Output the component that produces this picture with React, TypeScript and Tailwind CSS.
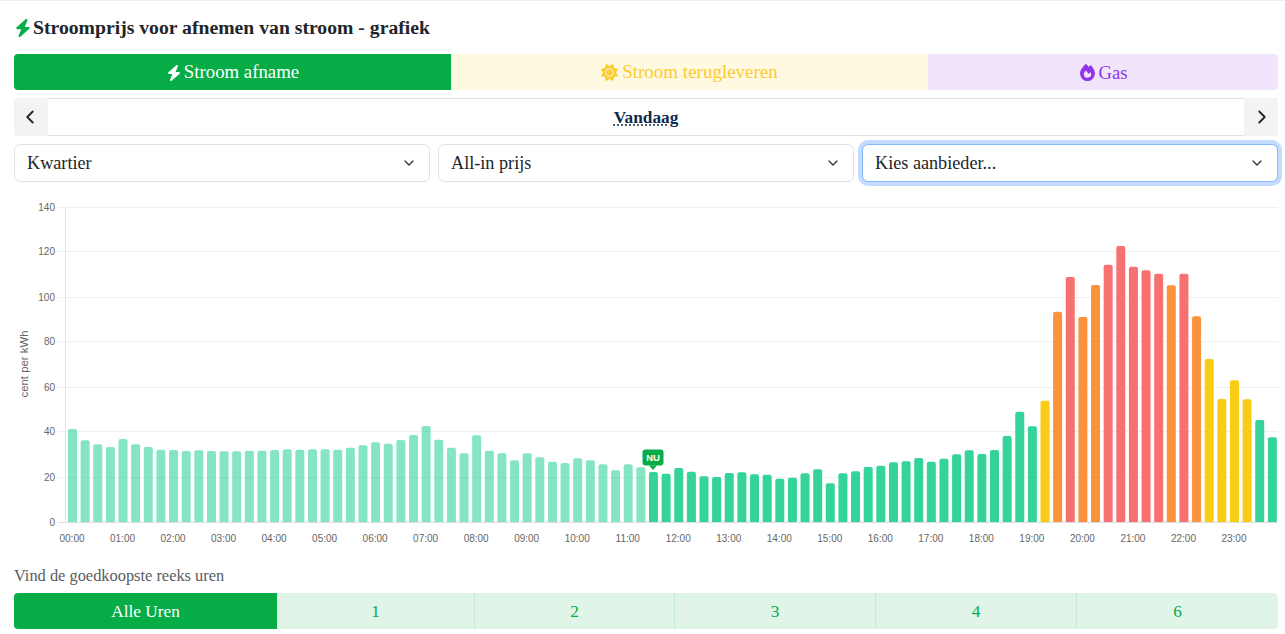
import { ChevronDown, ChevronLeft, ChevronRight } from "lucide-react";
import { FaBolt, FaFire, FaSun } from "react-icons/fa6";

const BASE_Y = 522;
const BAR_PITCH = 12.63;
const NOW_INDEX = 46;

// y axis ticks with the pixel row of their grid line
const ticks = [
  { v: 0, row: 522 },
  { v: 20, row: 477 },
  { v: 40, row: 431 },
  { v: 60, row: 387 },
  { v: 80, row: 341 },
  { v: 100, row: 297 },
  { v: 120, row: 251 },
  { v: 140, row: 207 },
];

// bar heights in px, one per quarter of an hour
const heights = [
  93, 81.7, 77.7, 75, 83, 77.7, 75, 72.3, 72, 71, 71.7, 71, 70.7, 70.7, 71.3, 71.3, 72, 72.7, 72.3, 72.7, 72.7,
  72.3, 74.3, 76.7, 79.7, 78.3, 82, 87, 96, 82.3, 74.3, 68.7, 86.7, 71.3, 68.7, 61.7, 68.7, 64.7, 60.3, 59, 63.7,
  61.7, 57.7, 51.7, 57.7, 54.7, 50, 48.3, 54, 50.3, 45.7, 45, 49, 49.7, 47.7, 47.3, 43.3, 44.3, 48.7, 52.7, 38.7,
  48.7, 50.7, 55, 56.3, 59.7, 60.7, 64, 60.3, 63.3, 67.7, 71.7, 68, 72, 86, 110.3, 95.7, 121.3, 210.3, 245, 205,
  237, 257.3, 276, 255.3, 251.7, 248.3, 236.7, 248.3, 205.7, 163, 123, 141.7, 122.7, 102, 84.7,
];

const barFill = (h: number) => {
  if (h >= 245) return "#f87171";
  if (h >= 200) return "#fb923c";
  if (h >= 120) return "#facc15";
  return "#34d399";
};

const Select = ({ label, focus }: { label: string; focus?: boolean }) => (
  <div
    className={`flex-1 h-[38px] flex items-center justify-between pl-3 pr-3 rounded-md border bg-white text-[#212529] text-[18.2px] ${
      focus ? "border-[#86b7fe] ring-4 ring-[#0d6efd]/25" : "border-[#dee2e6]"
    }`}
  >
    <span className="pt-px">{label}</span>
    <ChevronDown size={16} strokeWidth={2} className="text-[#343a40]" />
  </div>
);

const Chart = () => (
  <svg width="1285" height="362" viewBox="0 190 1285 362" className="block" fontFamily="'Liberation Sans', sans-serif">
    {ticks.map(({ v, row }) => (
      <g key={v}>
        <line x1="58" x2="1278" y1={row + 0.5} y2={row + 0.5} stroke={v === 0 ? "#dddddd" : "#f0f0f0"} />
        <text x="55" y={row + 4} fontSize="10" fill="#666666" textAnchor="end">
          {v}
        </text>
      </g>
    ))}
    <line x1="65.5" x2="65.5" y1="207" y2={BASE_Y} stroke="#e5e5e5" />
    <text transform="translate(28 364) rotate(-90)" fontSize="11.4" fill="#666666" textAnchor="middle">
      cent per kWh
    </text>
    {heights.map((h, i) => {
      const x = 68 + i * BAR_PITCH;
      const y = BASE_Y - h;
      return (
        <path
          key={i}
          d={`M${x} ${BASE_Y}V${y + 2}Q${x} ${y} ${x + 2} ${y}H${x + 7}Q${x + 9} ${y} ${x + 9} ${y + 2}V${BASE_Y}Z`}
          fill={barFill(h)}
          fillOpacity={i < NOW_INDEX ? 0.6 : 1}
        />
      );
    })}
    {Array.from({ length: 24 }, (_, hour) => (
      <text key={hour} x={72 + hour * 4 * BAR_PITCH} y="542" fontSize="10" fill="#666666" textAnchor="middle">
        {`${String(hour).padStart(2, "0")}:00`}
      </text>
    ))}
    <rect x="642.5" y="449.5" width="21" height="16" rx="3" fill="#06ad47" />
    <path d="M649 465.5h8l-4 4.5z" fill="#06ad47" />
    <text x="653" y="460.5" fontSize="9.5" fontWeight="700" fill="#ffffff" textAnchor="middle">
      NU
    </text>
  </svg>
);

const hourTabs = [
  { label: "1", w: "w-[197px]" },
  { label: "2", w: "w-[200px]" },
  { label: "3", w: "w-[201px]" },
  { label: "4", w: "w-[201px]" },
  { label: "6", w: "w-[202px]" },
];

export default function App() {
  return (
    <div className="w-[1285px] h-[634px] overflow-hidden bg-white border-t border-[#eeeeee] font-['Liberation_Serif',serif]">
      <div className="h-[53px] pl-[14px] pt-px flex items-center gap-px text-[#212529] font-bold text-[19.7px]">
        <FaBolt size={18} className="text-[#06ad47]" />
        <h1>Stroomprijs voor afnemen van stroom - grafiek</h1>
      </div>

      <div className="ml-[14px] mr-[7px] h-9 flex rounded overflow-hidden text-[18.6px]">
        <div className="w-[437px] pt-px flex items-center justify-center gap-[2px] bg-[#06ad47] text-white">
          <FaBolt size={16} />
          <span className="text-[18.8px]">Stroom afname</span>
        </div>
        <div className="w-[477px] pt-px flex items-center justify-center gap-1 bg-[#fff9e2] text-[#fdcb2e]">
          <FaSun size={17} />
          <span className="text-[19px]">Stroom terugleveren</span>
        </div>
        <div className="flex-1 pt-px flex items-center justify-center gap-[3px] bg-[#f1e5fb] text-[#9333ea]">
          <FaFire size={17} />
          Gas
        </div>
      </div>

      <div className="ml-[14px] mr-[7px] mt-2 h-[38px] flex">
        <div className="w-[34px] pr-0.5 flex items-center justify-center bg-[#f3f3f4] rounded-l text-[#212529]">
          <ChevronLeft size={22} strokeWidth={2} />
        </div>
        <div className="flex-1 pt-px flex items-center justify-center border-y border-[#dee2e6] text-[#0f2a4a] font-bold text-[17.3px]">
          <span className="underline decoration-dotted underline-offset-2">Vandaag</span>
        </div>
        <div className="w-[34px] pl-0.5 flex items-center justify-center bg-[#f3f3f4] text-[#212529]">
          <ChevronRight size={22} strokeWidth={2} />
        </div>
      </div>

      <div className="ml-[14px] mr-[7px] mt-2 flex gap-2">
        <Select label="Kwartier" />
        <Select label="All-in prijs" />
        <Select label="Kies aanbieder..." focus />
      </div>

      <div className="mt-2">
        <Chart />
      </div>

      <p className="ml-[14px] mt-[13px] h-[21px] text-[16.4px] leading-[21px] text-[#595c5f]">Vind de goedkoopste reeks uren</p>

      <div className="ml-[14px] mr-[7px] mt-[7px] h-9 flex rounded overflow-hidden text-[17.3px]">
        <div className="w-[263px] pt-px flex items-center justify-center bg-[#06ad47] text-white">Alle Uren</div>
        {hourTabs.map((t, i) => (
          <div
            key={t.label}
            className={`${t.w} pt-px flex items-center justify-center bg-[#e0f4e8] text-[#06ad47] ${
              i > 0 ? "border-l border-[#c4ead3]" : ""
            }`}
          >
            {t.label}
          </div>
        ))}
      </div>
    </div>
  );
}
